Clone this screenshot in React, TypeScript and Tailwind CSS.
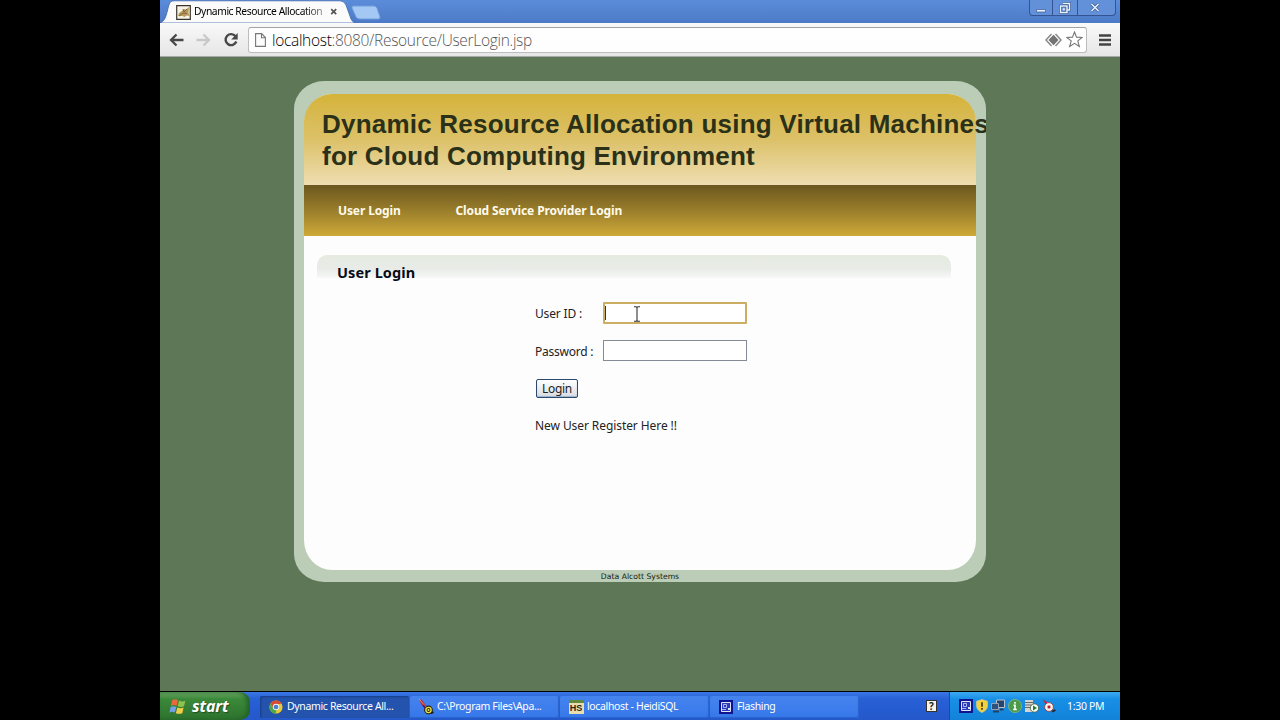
import { useState, type ReactNode } from "react";

const TASKS = [
  { key: "chrome", label: "Dynamic Resource All...", active: true, icon: <ChromeIcon /> },
  { key: "tomcat", label: "C:\\Program Files\\Apa...", active: false, icon: <FeatherIcon /> },
  { key: "heidi", label: "localhost - HeidiSQL", active: false, icon: <HeidiIcon /> },
  { key: "flash", label: "Flashing", active: false, icon: <FlashIcon /> },
];

function ChromeIcon() {
  return (
    <svg width="14" height="14" viewBox="0 0 16 16">
      <circle cx="8" cy="8" r="7.5" fill="#e9c92f" />
      <path d="M1.5 4.2A7.5 7.5 0 0 1 14.6 4.5H8A3.5 3.5 0 0 0 4.7 8.8z" fill="#d84b35" />
      <path d="M1.5 4.2 4.9 9.7A3.5 3.5 0 0 0 9 11.4L7.2 15.5A7.5 7.5 0 0 1 1.5 4.2z" fill="#4ca64b" />
      <circle cx="8" cy="8" r="3.6" fill="#eef3fa" />
      <circle cx="8" cy="8" r="2.7" fill="#4b7fcf" />
    </svg>
  );
}

function FeatherIcon() {
  return (
    <svg width="16" height="16" viewBox="0 0 16 16">
      <path d="M1 0 4 1 9 8 7 9 3 5z" fill="#b3204c" />
      <path d="M1 0 8 8" stroke="#e2a03a" strokeWidth="1" />
      <path d="M5 6 8 10" stroke="#5c1b63" strokeWidth="2" />
      <circle cx="10.5" cy="11" r="4.4" fill="#26240c" />
      <circle cx="10.5" cy="11" r="2.6" fill="#26240c" stroke="#e8de46" strokeWidth="1.4" />
      <circle cx="10.5" cy="11" r="1" fill="#f4ec79" />
      <path d="M13 14.5 15.5 13" stroke="#1b1b1b" strokeWidth="1.5" />
    </svg>
  );
}

function HeidiIcon() {
  return (
    <span className="flex h-[14px] w-[15px] shrink-0 items-center justify-center border-t-[3px] border-[#5f8a3d] bg-[#e9dcae] font-['Liberation_Sans',sans-serif] text-[9px] font-bold leading-none text-[#2b2410]">
      HS
    </span>
  );
}

function FlashIcon() {
  return (
    <svg width="14" height="14" viewBox="0 0 14 14">
      <path d="M0 0h14v14H0z" fill="#10138f" />
      <path d="M2.5 2.5h9v9h-9z" fill="#2a3bbb" stroke="#dfe4fb" />
      <path d="M4.500 4.500h3v3h-3zM3 9.500h4" fill="none" stroke="#b9c2f3" strokeWidth=".9" />
      <path d="M9 8h2v2H9z" fill="#dfe4fb" />
    </svg>
  );
}

function ShieldIcon() {
  return (
    <svg width="12" height="14" viewBox="0 0 12 14">
      <path d="M6 .6 11.4 2.2V7c0 3-2.4 5.2-5.4 6.5C3 12.2.6 10 .6 7V2.2z" fill="#f2d13c" stroke="#d8c790" strokeWidth=".8" />
      <path d="M6 3.2v4.6M6 9v1.8" stroke="#4b3a10" strokeWidth="1.7" />
    </svg>
  );
}

function NetworkIcon() {
  return (
    <svg width="14" height="14" viewBox="0 0 14 14">
      <path d="M5.500 1h8v7.500h-8z" fill="#27446e" stroke="#b8c4d0" />
      <path d="M.5 4.500h7v6h-7z" fill="#31517d" stroke="#8fa2b5" />
      <path d="M2 12.500h6M9 10.500h3.500" stroke="#26405f" strokeWidth="1.800" />
    </svg>
  );
}

function InfoIcon() {
  return (
    <svg width="14" height="14" viewBox="0 0 14 14">
      <circle cx="7" cy="7" r="6.6" fill="#4b9b4a" stroke="#8cbb87" strokeWidth=".7" />
      <path d="M7 3v1.7M5.5 6.2H7v4.3M5.2 10.5h3.6" fill="none" stroke="#fff" strokeWidth="1.6" />
    </svg>
  );
}

function ServerIcon() {
  return (
    <svg width="14" height="14" viewBox="0 0 14 14">
      <path d="M0 1h8v12H0z" fill="#d3d4cf" />
      <path d="M0 3.500h8M0 6h8M0 8.500h5" stroke="#686b66" />
      <circle cx="9.500" cy="9" r="4.200" fill="#f5faf3" stroke="#39513a" strokeWidth=".8" />
      <path d="M8 6.500v5l4-2.500z" fill="#1f7b2b" />
    </svg>
  );
}

function TomcatTrayIcon() {
  return (
    <svg width="14" height="14" viewBox="0 0 14 14">
      <path d="M.5.3 5 3l1.5 3L4 6z" fill="#c3283f" />
      <circle cx="7" cy="8" r="4.4" fill="#fbf3ef" stroke="#8d3f45" strokeWidth=".9" />
      <path d="M5.6 6.6h2.8v2.8H5.6z" fill="#bd1d28" />
      <path d="M10 12.8 13.5 11" stroke="#252525" strokeWidth="1.6" />
    </svg>
  );
}

function WindowButton({ className, children }: { className: string; children: ReactNode }) {
  return (
    <button type="button" className={`flex h-full items-center justify-center border-r border-[#345494] ${className}`}>
      {children}
    </button>
  );
}

function TabStrip() {
  return (
    <div className="relative flex h-[23px] bg-linear-to-b from-[#5b8cda] to-[#4c7ac6]">
      <svg className="absolute left-0 top-0" width="222" height="23" viewBox="0 0 222 23">
        <path d="M0 23C8 21 7 4 11 1.500Q12 .8 15 .8H180Q184 .8 186 5L191 19Q192.500 22.500 196 23z" fill="#fbfbfc" stroke="#3d66ac" strokeWidth=".8" />
        <path d="M193 6h21q2 0 3 2l3 9q.5 2-1.500 2H200q-3 0-4-2l-4-9q-.5-2 1-2z" fill="#a4c8f4" stroke="#6e9cdc" />
      </svg>
      <div className="relative ml-4 mt-1 flex h-4 w-[164px] items-center">
        <svg width="15" height="15" viewBox="0 0 15 15">
          <path d="M.7.7h13.600v13.600H.7z" fill="#f6f2e5" stroke="#38352f" strokeWidth="1.2" />
          <path d="M2 11 3 8l3-2 2-2 2 .5L13 2l-.5 6 1 3-3-.5-2 1.500-2-1z" fill="#b99a5c" />
          <path d="m3 11 4-3 4 .5M7 4l1 3 3-3" fill="none" stroke="#6a583a" strokeWidth=".8" />
        </svg>
        <span className="ml-[3px] w-[130px] whitespace-nowrap bg-linear-to-r from-black from-80% to-[#999] bg-clip-text text-[10.300px] tracking-[-0.43px] text-transparent">
          Dynamic Resource Allocation
        </span>
        <svg className="ml-[6px]" width="8" height="8" viewBox="0 0 8 8">
          <path d="m1.200 1.200 5 5m0-5-5 5" stroke="#555" strokeWidth="1.700" />
        </svg>
      </div>
      <div className="ml-auto mr-1 flex h-4 w-[87px] rounded-b border-x border-b border-[#345494] bg-[#6290d9]">
        <WindowButton className="w-[23px]">
          <svg width="12" height="12" viewBox="0 0 12 12">
            <path d="M1.500 7.500h9v2.500h-9z" fill="#e8f0fc" stroke="#3c5d97" strokeWidth=".7" />
          </svg>
        </WindowButton>
        <WindowButton className="w-[25px]">
          <svg width="12" height="12" viewBox="0 0 12 12">
            <path d="M4 1.500h6.500V8H8M1.500 4H8v6.500H1.500z" fill="none" stroke="#2f4f89" strokeWidth="2.600" />
            <path d="M4 1.500h6.500V8H8M1.500 4H8v6.500H1.500z" fill="none" stroke="#e8f0fc" strokeWidth="1.500" />
            <path d="M3.800 6.300H5.800v2H3.800z" fill="#e8f0fc" />
          </svg>
        </WindowButton>
        <button type="button" className="flex flex-1 items-center justify-center pr-[3px]">
          <svg width="10" height="9" viewBox="0 0 10 9">
            <path d="m1.500 1 7 7m0-7-7 7" stroke="#3c5d97" strokeWidth="3" />
            <path d="m1.500 1 7 7m0-7-7 7" stroke="#e4ecfa" strokeWidth="1.700" />
          </svg>
        </button>
      </div>
    </div>
  );
}

function Toolbar() {
  return (
    <div className="flex h-[34px] items-center border-b border-[#a7aaa7] bg-linear-to-b from-[#f9f9fa] to-[#e6e6e7] pl-[9px] pr-[9px]">
      <svg width="15" height="14" viewBox="0 0 15 14">
        <path d="M14.500 7H2M7.500 1.500 2 7l5.500 5.500" fill="none" stroke="#484848" strokeWidth="2.300" />
      </svg>
      <svg className="ml-[12px]" width="15" height="14" viewBox="0 0 15 14">
        <path d="M.5 7H13M7.500 1.500 13 7l-5.500 5.500" fill="none" stroke="#c9c9c9" strokeWidth="2.300" />
      </svg>
      <svg className="ml-[12px]" width="16" height="16" viewBox="0 0 16 16">
        <path d="M12.500 4.300A5.500 5.500 0 1 0 13.300 9.500" fill="none" stroke="#484848" strokeWidth="2.400" />
        <path d="M14.700 1v6.500H8.200z" fill="#484848" />
      </svg>
      <div className="ml-[9px] flex h-[26px] w-[839px] items-center rounded-[3px] border border-[#bcbcbe] border-t-[#a2a2a4] bg-[#fefefe] pl-[6px]">
        <svg width="11" height="14" viewBox="0 0 11 14">
          <path d="M.6.6h6L10.400 4.500v8.900H.6zM6.500.8v4h3.800" fill="#fcfcfc" stroke="#777" strokeWidth="1.100" />
        </svg>
        <span className="ml-[6px] mt-[2px] whitespace-nowrap font-['Open_Sans',sans-serif] text-[15.500px] font-light leading-none tracking-[-0.31px] text-[#555]">
          <span className="text-black">localhost</span>:8080/Resource/UserLogin.jsp
        </span>
        <svg className="ml-auto" width="17" height="14" viewBox="0 0 17 14">
          <path d="M6.500 1 1 7l5.500 6M10.500 1 16 7l-5.500 6" fill="none" stroke="#898989" strokeWidth="1.500" />
          <path d="m8.500 1.800 5 5.200-5 5.200-5-5.200z" fill="#737373" />
        </svg>
        <svg className="ml-[4px] mr-[3px]" width="17" height="17" viewBox="0 0 17 17">
          <path d="m8.500 1 2 5.100 5.700.3-4.400 3.500 1.500 5.500-4.800-3.100-4.800 3.100 1.500-5.500L.8 6.400l5.700-.3z" fill="#fff" stroke="#777" strokeWidth="1.100" />
        </svg>
      </div>
      <svg className="ml-auto" width="12" height="12" viewBox="0 0 12 12">
        <path d="M0 1.500h12M0 6h12M0 10.500h12" stroke="#434343" strokeWidth="2.300" />
      </svg>
    </div>
  );
}

function LoginForm() {
  const [user, setUser] = useState("");
  const [password, setPassword] = useState("");

  return (
    <form className="ml-[231px] mt-[24px] text-[12px] leading-4 text-[#222]" onSubmit={(e) => e.preventDefault()}>
      <div className="flex h-[22px] items-center">
        <label htmlFor="user" className="mt-[2px] w-[68px] whitespace-nowrap tracking-[-0.15px]">User ID :</label>
        <div className="relative">
          <input
            id="user"
            value={user}
            onChange={(e) => setUser(e.target.value)}
            className="block h-[22px] w-[144px] rounded-[1px] border-2 border-[#cbad63] bg-white px-1 outline-none"
          />
          <span className="absolute left-[2px] top-1 h-[14px] w-px bg-[#333]" />
          <svg className="absolute left-[30px] top-1" width="8" height="16" viewBox="0 0 8 16">
            <path d="M1 .7h2q1 0 1 1 0-1 1-1h2M4 1.500v13M1 15.300h2q1 0 1-1 0 1 1 1h2" fill="none" stroke="#333" strokeWidth="1.100" />
          </svg>
        </div>
      </div>
      <div className="mt-[16px] flex h-[21px] items-center">
        <label htmlFor="password" className="mt-[2px] w-[68px] whitespace-nowrap tracking-[-0.25px]">Password :</label>
        <input
          id="password"
          type="password"
          value={password}
          onChange={(e) => setPassword(e.target.value)}
          className="block h-[21px] w-[144px] border border-[#858b96] bg-white px-1 outline-none"
        />
      </div>
      <button
        type="submit"
        className="ml-px mt-[18px] block h-[19px] w-[42px] rounded-[2px] border border-[#2c4a6e] bg-linear-to-b from-white to-[#d9dce2] text-[12px] leading-none tracking-[-0.3px] shadow-[inset_0_-1px_1px_#9db2ce]"
      >
        Login
      </button>
      <a className="mt-[20px] block whitespace-nowrap tracking-[-0.08px]">New User Register Here !!</a>
    </form>
  );
}

function Page() {
  return (
    <div className="h-[634px] overflow-hidden bg-[#5d7757] pt-[24px] font-['Noto_Sans','Open_Sans',sans-serif]">
      <div className="ml-[134px] flex h-[501px] w-[692px] flex-col overflow-hidden rounded-[30px/28px] bg-[#bccdb7] px-[10px] pt-[13px]">
        <div className="h-[476px] rounded-[28px/30px] bg-[#fefdfe]">
          <header className="h-[91px] rounded-t-[28px] bg-linear-to-b from-[#d5b338] via-[#dcc168] via-50% to-[#efdeb0] pl-[18px] pt-[14px]">
            <h1 className="whitespace-nowrap font-['Liberation_Sans',Arial,sans-serif] text-[26px] font-bold leading-8 tracking-[0.22px] text-[#2a3118]">
              Dynamic Resource Allocation using Virtual Machines
              <br />
              for Cloud Computing Environment
            </h1>
          </header>
          <nav className="flex h-[51px] items-center bg-linear-to-b from-[#6c581f] via-[#9a7e2b] via-50% to-[#cfa938] pl-[34px] text-[12px] font-bold tracking-[-0.12px] text-[#fffbea]">
            <a className="w-[117.500px] whitespace-nowrap">User Login</a>
            <a className="whitespace-nowrap">Cloud Service Provider Login</a>
          </nav>
          <h2 className="ml-[13px] mt-[19px] h-[23px] w-[634px] rounded-t-[10px] bg-linear-to-b from-[#e6ebe1] via-[#e8ebe7] via-60% to-[#f7f8f7] pl-5 pt-[6px] text-[14.500px] font-bold leading-[22px] tracking-[0.1px] text-[#080c18]">
            User Login
          </h2>
          <LoginForm />
        </div>
        <footer className="pt-px text-center font-['DejaVu_Sans',sans-serif] text-[7.700px] leading-[11px] text-[#17210f]">
          Data Alcott Systems
        </footer>
      </div>
    </div>
  );
}

function Taskbar() {
  return (
    <div className="flex h-[29px] border-t border-black bg-linear-to-b from-[#3978e5] via-[#2860d6] via-25% to-[#2458cb] text-[10.500px] text-white">
      <button
        type="button"
        className="flex w-[90px] items-center rounded-r-[10px] bg-linear-to-b from-[#6da768] via-[#3b893a] via-25% to-[#2d722e] pl-[9px] shadow-[inset_-3px_0_4px_#236126]"
      >
        <svg width="18" height="17" viewBox="0 0 16 16">
          <path d="M2.500 2Q5 .5 8 2L6.700 7.300Q4 6 1.300 7.300z" fill="#e66a3a" />
          <path d="M9 2.500q3 1.500 6 0L13.600 7.800q-3 1.200-5.900 0z" fill="#8fc34c" />
          <path d="M1 8.500q2.700-1.300 5.400 0L5 13.700q-2.700-1.300-5 0z" fill="#72a0e9" />
          <path d="M7.400 9q3 1.200 5.900 0L12 14.300q-3 1.200-6 0z" fill="#f2cd45" />
        </svg>
        <span className="ml-[5px] font-['Open_Sans',sans-serif] text-[16px] font-bold italic leading-none tracking-[-0.1px] [text-shadow:1px_1px_1px_#234d22]">
          start
        </span>
      </button>
      <div className="ml-[10px] flex pt-[4px]">
        {TASKS.map((t) => (
          <div
            key={t.key}
            className={`mr-px flex h-[22px] w-[149px] items-center gap-[3px] rounded-[2px] pl-[8px] ${
              t.active
                ? "bg-[#2353ac] shadow-[inset_1px_1px_2px_#173d88]"
                : "bg-linear-to-b from-[#4583ee] to-[#3678ea] shadow-[inset_-1px_-1px_1px_#2b63cc]"
            }`}
          >
            <span className="flex w-4 shrink-0 justify-center">{t.icon}</span>
            <span className="whitespace-nowrap tracking-[-0.35px]">{t.label}</span>
          </div>
        ))}
      </div>
      <div className="ml-auto mr-[12px] flex items-center">
        <span className="flex h-[12px] w-[11px] items-center justify-center border border-[#333] bg-[#f5f4ea] text-[10px] font-bold leading-none text-[#222]">
          ?
        </span>
      </div>
      <div className="flex w-[171px] items-center border-l border-[#164d9e] bg-linear-to-b from-[#3aaaf1] via-[#188fe6] via-25% to-[#1282d8] pl-[9px]">
        <div className="flex items-center gap-[3px]">
          <FlashIcon />
          <ShieldIcon />
          <NetworkIcon />
          <InfoIcon />
          <ServerIcon />
          <TomcatTrayIcon />
        </div>
        <span className="ml-[11px] mt-px whitespace-nowrap tracking-[-0.3px]">1:30 PM</span>
      </div>
    </div>
  );
}

export default function App() {
  return (
    <div className="h-[720px] w-[1280px] overflow-hidden bg-black">
      <main className="mx-auto w-[960px] font-['Noto_Sans',sans-serif]">
        <TabStrip />
        <Toolbar />
        <Page />
        <Taskbar />
      </main>
    </div>
  );
}
